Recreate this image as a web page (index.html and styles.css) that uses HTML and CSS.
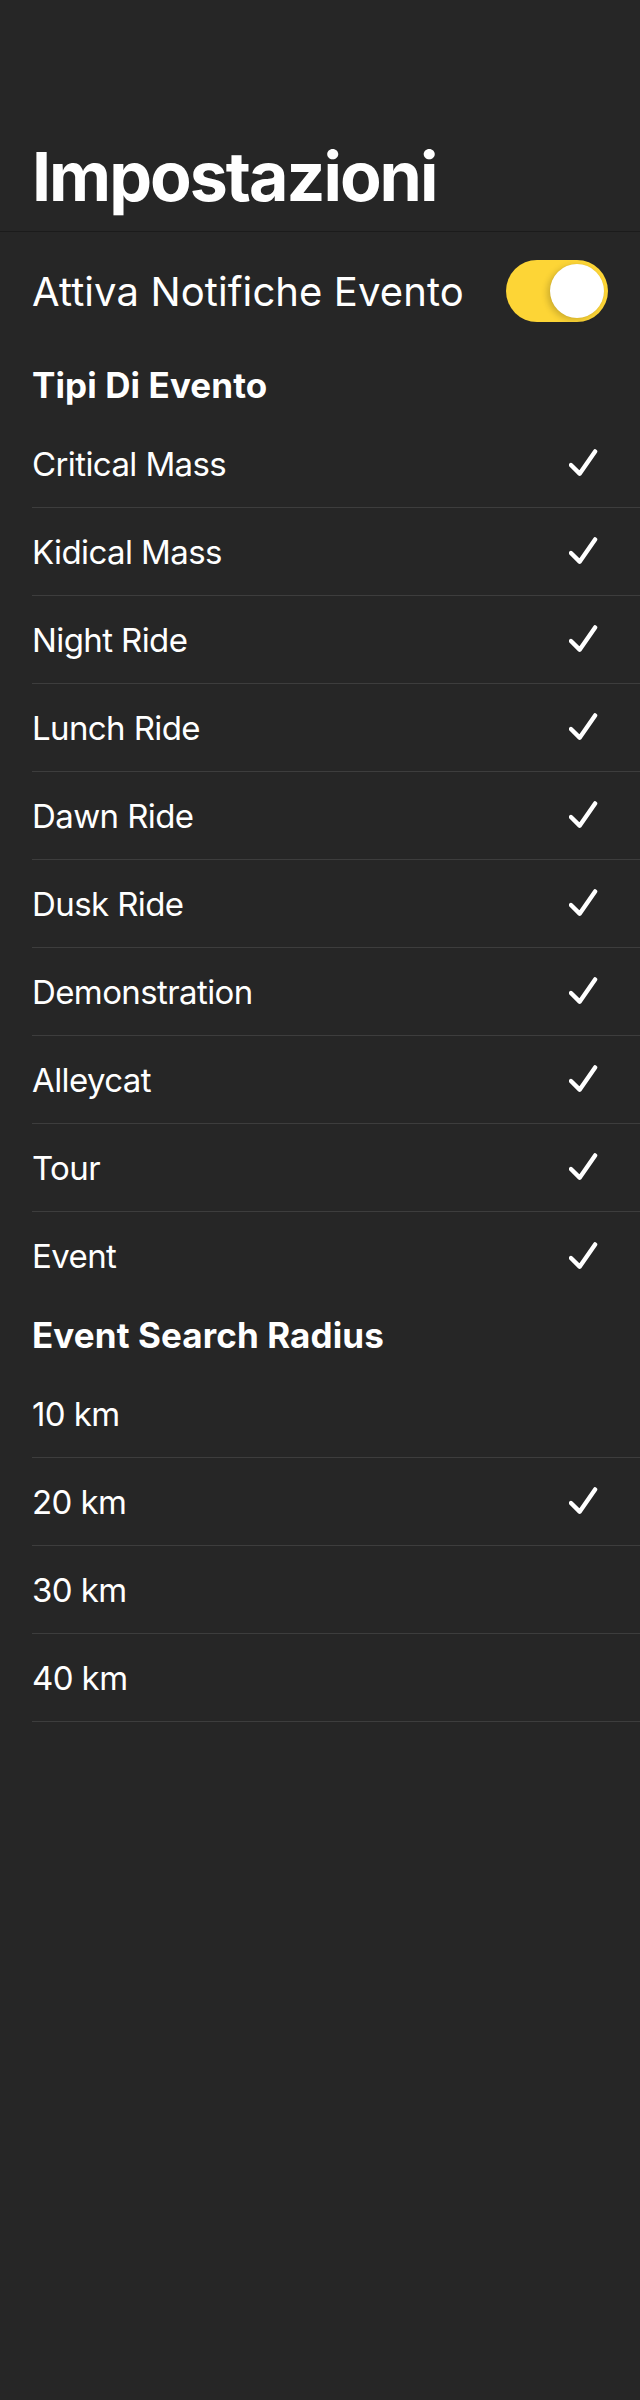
FILE: index.html
```html
<!DOCTYPE html>
<html lang="it">
<head>
<meta charset="utf-8">
<title>Impostazioni</title>
<link rel="stylesheet" href="styles.css">
</head>
<body>
<div class="screen">
  <header class="nav">
    <h1 class="title">Impostazioni</h1>
  </header>

  <div class="toggle-row">
    <span class="toggle-label">Attiva Notifiche Evento</span>
    <span class="switch on"><span class="knob"></span></span>
  </div>

  <h2 class="section-header">Tipi Di Evento</h2>
  <ul class="list">
    <li class="row"><span class="row-label">Critical Mass</span><svg class="check" viewBox="0 0 30 30"><path d="M2 16.5 L11 25.5 L27 2.5"/></svg></li>
    <li class="row"><span class="row-label">Kidical Mass</span><svg class="check" viewBox="0 0 30 30"><path d="M2 16.5 L11 25.5 L27 2.5"/></svg></li>
    <li class="row"><span class="row-label">Night Ride</span><svg class="check" viewBox="0 0 30 30"><path d="M2 16.5 L11 25.5 L27 2.5"/></svg></li>
    <li class="row"><span class="row-label">Lunch Ride</span><svg class="check" viewBox="0 0 30 30"><path d="M2 16.5 L11 25.5 L27 2.5"/></svg></li>
    <li class="row"><span class="row-label">Dawn Ride</span><svg class="check" viewBox="0 0 30 30"><path d="M2 16.5 L11 25.5 L27 2.5"/></svg></li>
    <li class="row"><span class="row-label">Dusk Ride</span><svg class="check" viewBox="0 0 30 30"><path d="M2 16.5 L11 25.5 L27 2.5"/></svg></li>
    <li class="row"><span class="row-label">Demonstration</span><svg class="check" viewBox="0 0 30 30"><path d="M2 16.5 L11 25.5 L27 2.5"/></svg></li>
    <li class="row"><span class="row-label">Alleycat</span><svg class="check" viewBox="0 0 30 30"><path d="M2 16.5 L11 25.5 L27 2.5"/></svg></li>
    <li class="row"><span class="row-label">Tour</span><svg class="check" viewBox="0 0 30 30"><path d="M2 16.5 L11 25.5 L27 2.5"/></svg></li>
    <li class="row last"><span class="row-label">Event</span><svg class="check" viewBox="0 0 30 30"><path d="M2 16.5 L11 25.5 L27 2.5"/></svg></li>
  </ul>

  <h2 class="section-header">Event Search Radius</h2>
  <ul class="list">
    <li class="row"><span class="row-label">10 km</span></li>
    <li class="row"><span class="row-label">20 km</span><svg class="check" viewBox="0 0 30 30"><path d="M2 16.5 L11 25.5 L27 2.5"/></svg></li>
    <li class="row"><span class="row-label">30 km</span></li>
    <li class="row"><span class="row-label">40 km</span></li>
  </ul>
</div>
</body>
</html>
```

FILE: styles.css
```css
html, body {
  margin: 0;
  padding: 0;
  background: #262626;
}

body {
  font-family: Inter, "Noto Sans", "Liberation Sans", sans-serif;
  color: #ffffff;
  min-height: 2400px;
}

.screen {
  width: 640px;
}

.nav {
  padding: 136px 32px 15px;
  border-bottom: 1px solid #1b1b1b;
}

.title {
  margin: 0;
  font-size: 68px;
  font-weight: 700;
  line-height: 80px;
  letter-spacing: -2px;
}

.toggle-row {
  height: 118px;
  padding: 0 32px;
  display: flex;
  align-items: center;
  justify-content: space-between;
}

.toggle-label {
  font-size: 40px;
  font-weight: 400;
  letter-spacing: 0.1px;
}

.switch {
  width: 102px;
  height: 62px;
  border-radius: 31px;
  background: #fdd536;
  display: flex;
  align-items: center;
  justify-content: flex-end;
  padding: 0 4px;
  box-sizing: border-box;
}

.knob {
  width: 54px;
  height: 54px;
  border-radius: 50%;
  background: #ffffff;
  box-shadow: -3px 2px 6px rgba(0, 0, 0, 0.18), 0 0 1px rgba(0, 0, 0, 0.1);
}

.section-header {
  margin: 0;
  height: 70px;
  padding: 0 32px;
  display: flex;
  align-items: center;
  font-size: 35px;
  font-weight: 700;
  letter-spacing: 0.1px;
}

.list {
  list-style: none;
  margin: 0;
  padding: 0 0 0 32px;
}

.row {
  height: 88px;
  box-sizing: border-box;
  border-bottom: 1px solid #3d3d3d;
  display: flex;
  align-items: center;
  justify-content: space-between;
  padding-right: 42px;
}

.row.last {
  border-bottom: none;
}

.row-label {
  font-size: 33px;
  font-weight: 400;
  letter-spacing: -0.6px;
}

.check {
  width: 29px;
  height: 29px;
  fill: none;
  stroke: #ffffff;
  stroke-width: 4.5;
  stroke-linecap: round;
  stroke-linejoin: round;
}
```
